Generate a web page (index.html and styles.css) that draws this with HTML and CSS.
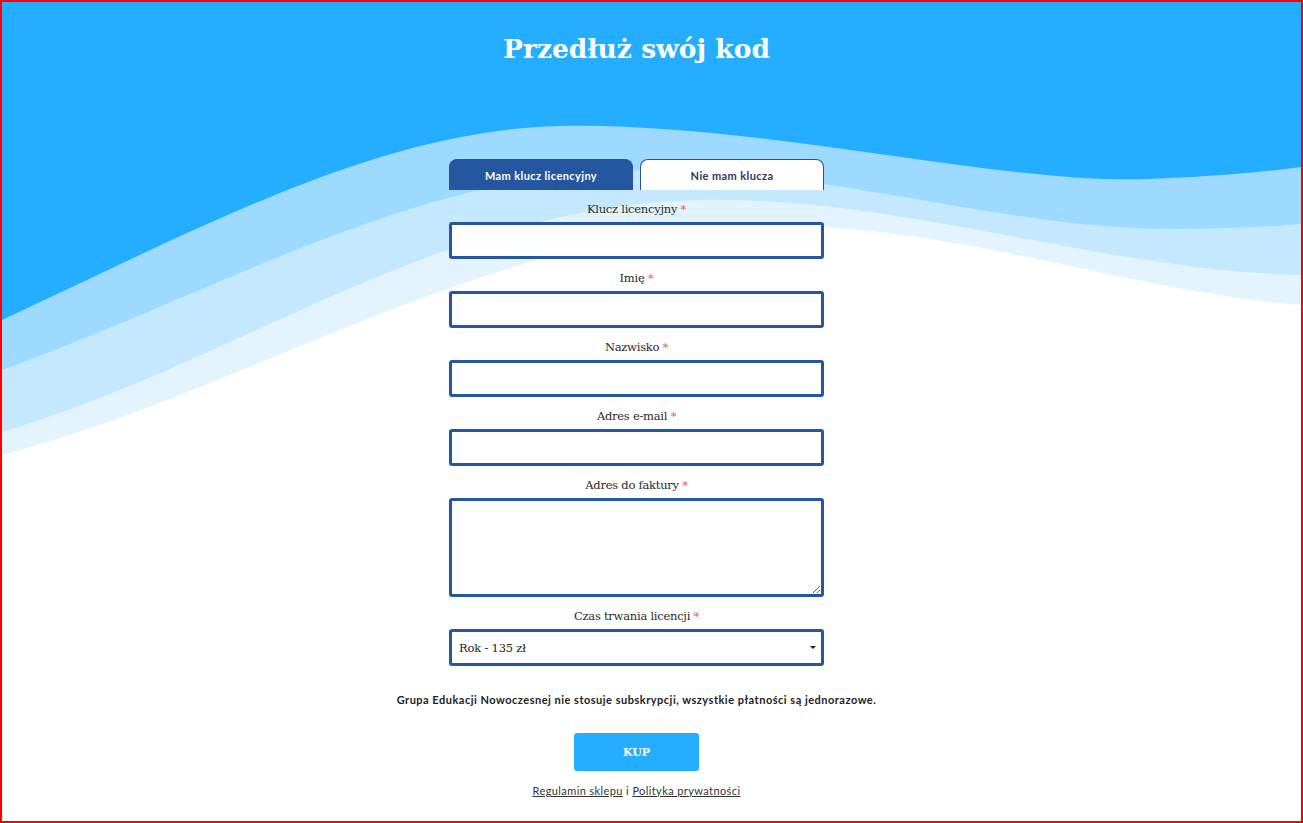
FILE: index.html
```html
<!DOCTYPE html>
<html lang="pl">
<head>
<meta charset="utf-8">
<title>Przedłuż swój kod</title>
<link rel="stylesheet" href="styles.css">
</head>
<body>
<div class="page">
  <svg class="waves" viewBox="0 0 1299 470" preserveAspectRatio="none" aria-hidden="true">
    <path fill="#e3f4fe" d="M0,0 L0,453 C250,388 480,228 758,224 C948,220 1118,288 1299,303 L1299,0 Z"/>
    <path fill="#c4e8fe" d="M0,0 L0,430 C240,358 440,203 698,198 C898,194 1098,268 1299,273 L1299,0 Z"/>
    <path fill="#9ed9ff" d="M0,0 L0,368 C220,288 420,168 638,168 C848,168 998,228 1178,227 C1238,226 1278,224 1299,222 L1299,0 Z"/>
    <path fill="#25adff" d="M0,0 L0,318 C210,220 380,128 558,124 C758,120 998,183 1148,177 C1228,174 1278,168 1299,165 L1299,0 Z"/>
  </svg>
  <main class="content">
    <h1 class="title">Przedłuż swój kod</h1>
    <form class="form">
      <div class="tabs">
        <button type="button" class="tab tab-active">Mam klucz licencyjny</button>
        <button type="button" class="tab">Nie mam klucza</button>
      </div>
      <div class="field">
        <label class="label">Klucz licencyjny <span class="req">*</span></label>
        <input class="input" type="text">
      </div>
      <div class="field">
        <label class="label">Imię <span class="req">*</span></label>
        <input class="input" type="text">
      </div>
      <div class="field">
        <label class="label">Nazwisko <span class="req">*</span></label>
        <input class="input" type="text">
      </div>
      <div class="field">
        <label class="label">Adres e-mail <span class="req">*</span></label>
        <input class="input" type="email">
      </div>
      <div class="field">
        <label class="label">Adres do faktury <span class="req">*</span></label>
        <textarea class="input textarea"></textarea>
      </div>
      <div class="field">
        <label class="label">Czas trwania licencji <span class="req">*</span></label>
        <div class="select-wrap">
          <select class="input select">
            <option>Rok - 135 zł</option>
          </select>
        </div>
      </div>
    </form>
    <p class="note">Grupa Edukacji Nowoczesnej nie stosuje subskrypcji, wszystkie płatności są jednorazowe.</p>
    <button type="button" class="buy">KUP</button>
    <p class="links"><a href="#">Regulamin sklepu</a> i <a href="#">Polityka prywatności</a></p>
  </main>
</div>
</body>
</html>
```
FILE: styles.css
```css
* { box-sizing: border-box; }
html, body { margin: 0; padding: 0; }
body {
  background: #fff;
  font-family: Lato, "Open Sans", sans-serif;
}
.page {
  position: relative;
  width: 100%;
  height: 100vh;
  border: 2px solid #ff0000;
  overflow: hidden;
  background: #fff;
}
.waves {
  position: absolute;
  top: 0;
  left: 0;
  width: 100%;
  height: 470px;
  display: block;
}
.content {
  position: relative;
  display: flex;
  flex-direction: column;
  align-items: center;
  padding-right: 30px;
}
.title {
  margin: 0;
  padding-top: 27px;
  height: 157px;
  line-height: 40px;
  font-family: "DejaVu Serif", "Liberation Serif", serif;
  font-weight: bold;
  font-size: 26.5px;
  color: #fff;
}
.form {
  width: 375px;
  display: flex;
  flex-direction: column;
}
.tabs {
  display: flex;
  gap: 7px;
  height: 31px;
  margin-bottom: 10px;
}
.tab {
  flex: 1;
  border: 1px solid #2557a0;
  border-bottom: none;
  border-radius: 8px 8px 0 0;
  background: #fff;
  color: #2b3a5a;
  font-family: Lato, "Open Sans", sans-serif;
  font-weight: bold;
  font-size: 11px;
  letter-spacing: 0.4px;
  padding: 1px 0 0 0;
  cursor: pointer;
}
.tab-active {
  background: #2557a0;
  color: #fff;
}
.field {
  display: flex;
  flex-direction: column;
  align-items: stretch;
  margin-bottom: 10px;
}
.label {
  display: block;
  text-align: center;
  font-family: "DejaVu Serif", "Liberation Serif", serif;
  font-size: 11.5px;
  letter-spacing: -0.25px;
  line-height: 19px;
  color: #2a2a2a;
  margin-bottom: 3px;
}
.req { color: #f0506e; }
.input {
  display: block;
  width: 100%;
  height: 37px;
  border: 3px solid #2557a0;
  border-radius: 3px;
  background: #fff;
  padding: 0 7px;
  font-family: "DejaVu Serif", "Liberation Serif", serif;
  font-size: 11.5px;
  letter-spacing: -0.2px;
  color: #222;
  outline: none;
  margin: 0;
}
.textarea {
  height: 99px;
  padding: 6px 7px;
  resize: vertical;
}
.select-wrap { position: relative; }
.select {
  -webkit-appearance: none;
  appearance: none;
  cursor: pointer;
}
.select-wrap::after {
  content: "";
  position: absolute;
  right: 8px;
  top: 17px;
  border-left: 3px solid transparent;
  border-right: 3px solid transparent;
  border-top: 3px solid #222;
}
.note {
  margin: 16px 0 0 0;
  font-family: Lato, "Open Sans", sans-serif;
  font-weight: bold;
  font-size: 11px;
  letter-spacing: 0.5px;
  line-height: 16px;
  color: #222;
}
.buy {
  margin-top: 25px;
  width: 125px;
  height: 38px;
  border: none;
  border-radius: 3px;
  background: #25adff;
  color: #fff;
  font-family: "DejaVu Serif", "Liberation Serif", serif;
  font-weight: bold;
  font-size: 11px;
  cursor: pointer;
}
.links {
  margin: 12px 0 0 0;
  font-family: Lato, "Open Sans", sans-serif;
  font-size: 11px;
  letter-spacing: 0.4px;
  line-height: 16px;
  color: #333;
}
.links a {
  color: #333;
  text-decoration: underline;
}
```
